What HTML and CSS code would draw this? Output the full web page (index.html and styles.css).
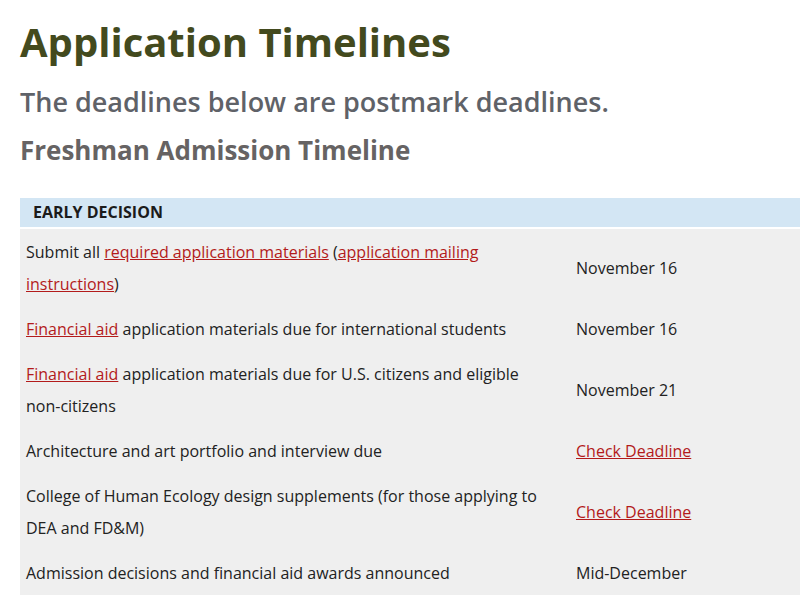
FILE: index.html
```html
<!DOCTYPE html>
<html>
<head>
<meta charset="utf-8">
<link rel="stylesheet" href="styles.css">
</head>
<body>
<main class="page">
  <h1 class="title">Application Timelines</h1>
  <h2 class="subtitle">The deadlines below are postmark deadlines.</h2>
  <h3 class="section">Freshman Admission Timeline</h3>
  <table class="timeline">
    <thead>
      <tr><th colspan="2" class="head">EARLY DECISION</th></tr>
    </thead>
    <tbody>
      <tr>
        <td class="task">Submit all <a href="#">required application materials</a> (<a href="#">application mailing instructions</a>)</td>
        <td class="date">November 16</td>
      </tr>
      <tr>
        <td class="task"><a href="#">Financial aid</a> application materials due for international students</td>
        <td class="date">November 16</td>
      </tr>
      <tr>
        <td class="task"><a href="#">Financial aid</a> application materials due for U.S. citizens and eligible non-citizens</td>
        <td class="date">November 21</td>
      </tr>
      <tr>
        <td class="task">Architecture and art portfolio and interview due</td>
        <td class="date"><a href="#">Check Deadline</a></td>
      </tr>
      <tr>
        <td class="task">College of Human Ecology design supplements (for those applying to DEA and FD&amp;M)</td>
        <td class="date"><a href="#">Check Deadline</a></td>
      </tr>
      <tr>
        <td class="task">Admission decisions and financial aid awards announced</td>
        <td class="date">Mid-December</td>
      </tr>
    </tbody>
  </table>
</main>
</body>
</html>
```
FILE: styles.css
```css
html, body {
  margin: 0;
  padding: 0;
  overflow: hidden;
  background: #fff;
}
.page {
  padding: 14px 0 0 20px;
  width: 820px;
  font-family: "Open Sans", sans-serif;
  color: #222;
}
.title {
  margin: 0;
  font-size: 40px;
  line-height: 56px;
  font-weight: 700;
  color: #434a1e;
}
.subtitle {
  margin: 12px 0 0;
  font-size: 27px;
  line-height: 40px;
  font-weight: 600;
  color: #5f6268;
}
.section {
  margin: 8px 0 28px;
  font-size: 26px;
  line-height: 40px;
  font-weight: 700;
  color: #666363;
}
.timeline {
  border-collapse: collapse;
  width: 800px;
  font-size: 16px;
  line-height: 32px;
}
.head {
  background: #d3e6f4;
  text-align: left;
  font-size: 16px;
  font-weight: 700;
  line-height: 29px;
  padding: 0 13px;
  color: #1b1b1b;
  border-bottom: 2px solid #fff;
}
.timeline td {
  background: #efefef;
  padding: 6.5px 6px;
  vertical-align: middle;
}
.timeline td.task {
  width: 530px;
  padding-right: 14px;
}
.timeline a {
  color: #b31b1b;
  text-decoration: underline;
}
```
